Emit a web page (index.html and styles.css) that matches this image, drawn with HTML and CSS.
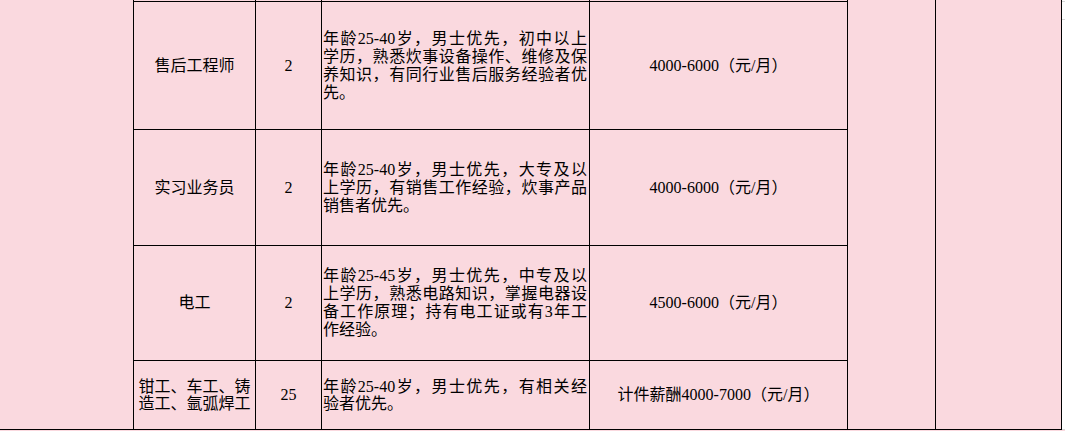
FILE: index.html
```html
<!DOCTYPE html>
<html lang="zh-CN">
<head>
<meta charset="utf-8">
<title>招聘岗位</title>
<link rel="stylesheet" href="styles.css">
</head>
<body>
<div class="sheet">
  <div class="side"></div>
  <div class="merge m5"></div>
  <div class="merge m6"></div>
  <div class="gutter"></div>

  <div class="stub"></div>
  <div class="stub"></div>
  <div class="stub"></div>
  <div class="stub"></div>

  <div class="cell">售后工程师</div>
  <div class="cell">2</div>
  <div class="cell desc"><div class="t"><span class="ln">年龄25-40岁，男士优先，初中以上</span><span class="ln">学历，熟悉炊事设备操作、维修及保</span><span class="ln">养知识，有同行业售后服务经验者优</span><span class="ln last">先。</span></div></div>
  <div class="cell">4000-6000（元/月）</div>

  <div class="cell">实习业务员</div>
  <div class="cell">2</div>
  <div class="cell desc"><div class="t"><span class="ln">年龄25-40岁，男士优先，大专及以</span><span class="ln">上学历，有销售工作经验，炊事产品</span><span class="ln last">销售者优先。</span></div></div>
  <div class="cell">4000-6000（元/月）</div>

  <div class="cell">电工</div>
  <div class="cell">2</div>
  <div class="cell desc"><div class="t"><span class="ln">年龄25-45岁，男士优先，中专及以</span><span class="ln">上学历，熟悉电路知识，掌握电器设</span><span class="ln">备工作原理；持有电工证或有3年工</span><span class="ln last">作经验。</span></div></div>
  <div class="cell">4500-6000（元/月）</div>

  <div class="cell tight"><div class="t"><span class="ln2">钳工、车工、铸</span><span class="ln2">造工、氩弧焊工</span></div></div>
  <div class="cell">25</div>
  <div class="cell desc tight"><div class="t"><span class="ln">年龄25-40岁，男士优先，有相关经</span><span class="ln last">验者优先。</span></div></div>
  <div class="cell">计件薪酬4000-7000（元/月）</div>
</div>
</body>
</html>
```

FILE: styles.css
```css
html, body {
  margin: 0;
  padding: 0;
  background: #fad9df;
}

body {
  width: 1065px;
  height: 431px;
  overflow: hidden;
  font-family: "Liberation Serif", "Noto Sans CJK SC", serif;
  font-size: 16px;
  color: #000;
}

.sheet {
  display: grid;
  grid-template-columns: 134px 122px 66px 268px 258px 88px 126px 3px;
  grid-template-rows: 2px 128px 116px 115px 69px;
}

.sheet > div {
  box-sizing: border-box;
  border-right: 1px solid #000;
  border-bottom: 1px solid #000;
  min-width: 0;
}

.side {
  grid-column: 1;
  grid-row: 1 / 6;
}

.m5 {
  grid-column: 6;
  grid-row: 1 / 6;
}

.m6 {
  grid-column: 7;
  grid-row: 1 / 6;
}

.sheet > .gutter {
  grid-column: 8;
  grid-row: 1 / 6;
  border: none;
  background-color: #ffffff;
  background-image:
    linear-gradient(#d6d6d6, #d6d6d6),
    linear-gradient(#d6d6d6, #d6d6d6),
    linear-gradient(#d6d6d6, #d6d6d6);
  background-size: 100% 1px;
  background-position: 0 1px, 0 19px, 0 429px;
  background-repeat: no-repeat;
}

.cell {
  display: flex;
  align-items: center;
  justify-content: center;
  text-align: center;
  line-height: 18px;
  white-space: nowrap;
}

.desc {
  justify-content: flex-start;
  padding: 0 2px 0 1px;
}

.desc .t {
  width: 100%;
}

.ln {
  display: block;
  white-space: nowrap;
  text-align: justify;
  text-align-last: justify;
}

.ln.last {
  text-align-last: left;
}

.ln2 {
  display: block;
}

.tight {
  line-height: 17px;
}
```
